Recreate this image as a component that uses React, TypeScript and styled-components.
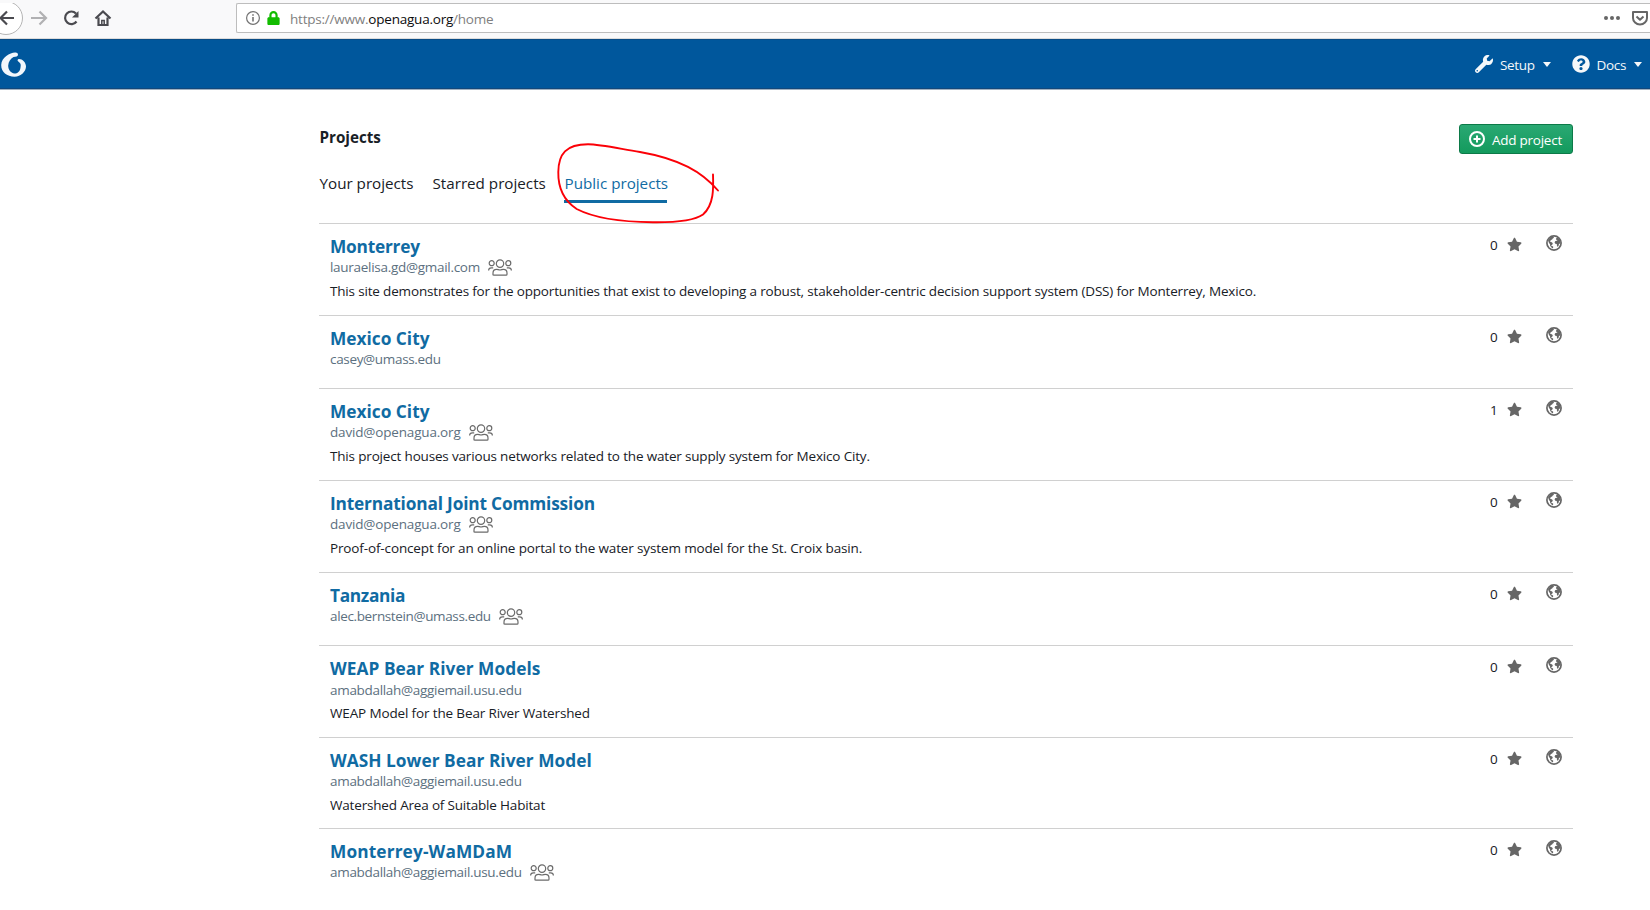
import React from "react";
import styled, { createGlobalStyle } from "styled-components";
import { FaWrench, FaQuestionCircle, FaStar, FaLock } from "react-icons/fa";

const Global = createGlobalStyle`
  *, *::before, *::after { box-sizing: border-box; }
  body { margin: 0; background: #fff; color: #182026; overflow: hidden;
    font-family: "Open Sans", "Noto Sans", sans-serif; font-size: 13.5px; }
`;

const Page = styled.div`
  width: 1650px; height: 910px; overflow: hidden; display: flex; flex-direction: column; background: #fff;
`;

const BrowserBar = styled.header`
  flex: none; height: 39px; background: #f9f9fa; border-bottom: 1px solid #dcdcdc;
  display: flex; align-items: flex-start; padding-top: 3px;
`;
const NavButtons = styled.div`
  width: 236px; flex: none; height: 32px; display: flex;
`;
const AddressBox = styled.div`
  flex: 1; height: 30px; background: #fff; border: 1px solid #bdbdbd; border-right: 0;
  border-radius: 2px 0 0 2px; display: flex; align-items: center; padding-left: 9px;
`;
const LockIcon = styled(FaLock)`
  margin-left: 7px; color: #12bc00; width: 13px; height: 14px;
`;
const Url = styled.div`
  margin-left: 10px; color: #808080; flex: 1; line-height: 20px; padding-top: 2px;
  letter-spacing: -0.22px; white-space: nowrap;
  span { color: #0c0c0d; }
`;

const AppBar = styled.nav`
  flex: none; height: 50px; background: #00579c; border-top: 1px solid #0a4c85; border-bottom: 1px solid #11487c;
  box-shadow: 0 1px 0 #9fb0c0; display: flex; align-items: center; color: #f5f8fa;
`;
const Logo = styled.svg`
  width: 27px; height: 27px; margin-right: auto;
`;
const MenuItem = styled.div<{ $gap: number }>`
  display: flex; align-items: center; margin-right: ${(p) => p.$gap}px; white-space: nowrap;
  letter-spacing: -0.35px;
  svg { width: 18px; height: 18px; margin-right: 7px; }
  span { padding-top: 2px; }
`;
const Caret = styled.i`
  margin-left: 8px; border: 4.5px solid transparent; border-top: 5px solid #f5f8fa; border-bottom: 0;
`;

const Main = styled.main`
  width: 1254px; margin-left: 319px; padding-top: 35px; display: flex; flex-direction: column;
`;
const HeadRow = styled.div`
  display: flex; justify-content: space-between; align-items: flex-start; height: 44px;
`;
const Heading = styled.h1`
  margin: 2px 0 0; padding-left: 0.5px; font-size: 15.2px; line-height: 22px; font-weight: 700;
`;
const AddButton = styled.button`
  width: 114px; height: 30px; padding: 0 0 0 9px; border: 1px solid #0c7a48; border-radius: 3px;
  background: linear-gradient(#2aa873, #139a5d); color: #fff; font: inherit; display: flex; align-items: center;
  white-space: nowrap; letter-spacing: -0.25px;
  svg { margin-right: 7px; flex: none; }
  span { padding-top: 2px; }
`;
const Tabs = styled.div`
  display: flex; gap: 20px; height: 55px;
`;
const Tab = styled.div<{ $active?: boolean; $width: number }>`
  width: ${(p) => p.$width}px; height: 35px; font-size: 15.2px; line-height: 31px; white-space: nowrap;
  padding-left: 0.5px;
  color: ${(p) => (p.$active ? "#106ba3" : "#182026")};
  border-bottom: 3px solid ${(p) => (p.$active ? "#106ba3" : "transparent")};
`;

const Row = styled.article<{ $height: number }>`
  height: ${(p) => p.$height}px; border-top: 1px solid #d0d0d0; padding: 0 11px;
  display: flex; justify-content: space-between;
`;
const Info = styled.div`
  padding-top: 11px;
`;
const Title = styled.h2<{ $track: number }>`
  margin: 0; font-size: 17.3px; line-height: 24px; font-weight: 700; color: #106ba3; white-space: nowrap;
  letter-spacing: ${(p) => p.$track}px;
`;
const Owner = styled.div<{ $track: number; $drop?: number }>`
  display: flex; align-items: center; height: 18px; color: #5c7080; white-space: nowrap;
  margin: ${(p) => (p.$drop || 0) - 1}px 0 ${(p) => 6 - (p.$drop || 0)}px;
  letter-spacing: ${(p) => p.$track}px;
  svg { margin-left: 8px; }
`;
const Description = styled.p<{ $track: number }>`
  margin: 0; line-height: 18px; white-space: nowrap; letter-spacing: ${(p) => p.$track}px;
`;
const Stats = styled.div`
  display: flex; align-items: flex-start;
`;
const StarCount = styled.span`
  width: 17px; margin-top: 11px; line-height: 20px;
`;
const StarIcon = styled(FaStar)`
  width: 15px; height: 15px; margin-top: 13px; color: #666;
`;
const GlobeSvg = styled.svg`
  width: 16px; height: 16px; margin: 11px 0 0 24px;
`;
const Scribble = styled.svg`
  position: absolute; left: 550px; top: 136px; pointer-events: none;
`;

const People = () => (
  <svg width="24" height="17" viewBox="0 0 24 17" fill="none" stroke="#6b6b6b" strokeWidth="1.2">
    <circle cx="12" cy="4.6" r="3.7" />
    <circle cx="3.7" cy="4.2" r="2.5" />
    <circle cx="20.3" cy="4.2" r="2.5" />
    <path d="M5 16.2V14c0-2.4 1.500-3.600 3.600-3.600 1.200 0 2 .6 3.400.6s2.200-.6 3.400-.6c2.100 0 3.600 1.200 3.600 3.600v1.300c0 .6-.4.900-.9.900H5.900c-.5 0-.9-.3-.9-.9z" />
    <path d="M.6 11.600C.6 9.700 1.500 8.800 3.400 8.800h1.800M23.400 11.600c0-1.900-.9-2.800-2.800-2.800h-1.800" />
  </svg>
);

const Globe = () => (
  <GlobeSvg viewBox="0 0 16 16">
    <circle cx="8" cy="8" r="7.100" fill="none" stroke="#666" strokeWidth="1.700" />
    <path fill="#666" d="M2 5.400 3.800 2.800 6.400 1.400l1.500.5-.2 1-1 .5-.3.900-1.200.7-.9.800-.2.900 1 .4 1 .3.700.9-.4 1.100-.9.800-.5 1.600-.8-.8-.2-1.800-1-1.200zM5 10.800l1.800.4.500.9-.4 1.200-1.200-.3zM10.200 3l1.400-.7 2.300 2.200.7 2.800-.3 1.500-1.300-.1-.3 1.900-1 1.300-.8-1.300-.1-1.700-1.500-.2-.7-1.100.5-1.400 1.400-.5.900-.2-.4-.8-.9.200z" />
  </GlobeSvg>
);

type Project = {
  title: string; owner: string; shared?: boolean; text?: string; stars: number;
  height: number; titleTrack: number; ownerTrack: number; textTrack?: number; drop?: number;
};

const projects: Project[] = [
  { title: "Monterrey", owner: "lauraelisa.gd@gmail.com", shared: true, text: "This site demonstrates for the opportunities that exist to developing a robust, stakeholder-centric decision support system (DSS) for Monterrey, Mexico.", stars: 0, height: 92, titleTrack: -0.23, ownerTrack: -0.29, textTrack: -0.17 },
  { title: "Mexico City", owner: "casey@umass.edu", stars: 0, height: 73, titleTrack: 0, ownerTrack: -0.33 },
  { title: "Mexico City", owner: "david@openagua.org", shared: true, text: "This project houses various networks related to the water supply system for Mexico City.", stars: 1, height: 92, titleTrack: 0, ownerTrack: -0.17, textTrack: -0.17 },
  { title: "International Joint Commission", owner: "david@openagua.org", shared: true, text: "Proof-of-concept for an online portal to the water system model for the St. Croix basin.", stars: 0, height: 92, titleTrack: -0.17, ownerTrack: -0.17, textTrack: -0.135 },
  { title: "Tanzania", owner: "alec.bernstein@umass.edu", shared: true, stars: 0, height: 73, titleTrack: -0.33, ownerTrack: -0.37 },
  { title: "WEAP Bear River Models", owner: "amabdallah@aggiemail.usu.edu", text: "WEAP Model for the Bear River Watershed", stars: 0, height: 92, titleTrack: 0.05, ownerTrack: -0.31, textTrack: -0.14, drop: 1 },
  { title: "WASH Lower Bear River Model", owner: "amabdallah@aggiemail.usu.edu", text: "Watershed Area of Suitable Habitat", stars: 0, height: 91, titleTrack: 0.04, ownerTrack: -0.31, textTrack: -0.18 },
  { title: "Monterrey-WaMDaM", owner: "amabdallah@aggiemail.usu.edu", shared: true, stars: 0, height: 82, titleTrack: 0.12, ownerTrack: -0.31 },
];

export default function App() {
  return (
    <Page>
      <Global />
      <BrowserBar>
        <NavButtons>
          <svg width="120" height="34" viewBox="0 3 120 34" fill="none" stroke="#4a4a4f" strokeWidth="2.200">
            <circle cx="6" cy="18" r="16.500" fill="#fff" stroke="#b5b5b5" strokeWidth="1" />
            <path d="M14 18H1M7 11.500 0.500 18 7 24.500" />
            <path stroke="#b1b1b3" d="M31 18h14.500M39.500 11.500 46 18l-6.500 6.500" />
            <path d="M76.500 21.500A6.300 6.300 0 1 1 76 13.500" />
            <path d="M78.500 11v6.500H72z" fill="#4a4a4f" stroke="none" />
            <path d="M95.500 18.500 103 11.500l7.500 7M98.500 17.500V25h9v-7.500" />
            <path d="M101.800 25v-4.500h2.400V25" strokeWidth="1.500" />
          </svg>
        </NavButtons>
        <AddressBox>
          <svg width="14" height="14" viewBox="0 0 14 14"><circle cx="7" cy="7" r="6.400" fill="none" stroke="#737373" strokeWidth="1.200" /><path d="M7 6v4.500M7 3.200v1.600" stroke="#737373" strokeWidth="1.600" /></svg>
          <LockIcon />
          <Url>https://www.<span>openagua.org</span>/home</Url>
          <svg width="47" height="16" viewBox="0 0 47 16">
            <circle cx="3" cy="8" r="2" fill="#666" /><circle cx="9" cy="8" r="2" fill="#666" /><circle cx="15" cy="8" r="2" fill="#666" />
            <path d="M30 2h14v6a7 6.500 0 0 1-14 0zM33.500 6.500l3.500 3.300 3.500-3.300" fill="none" stroke="#666" strokeWidth="2" strokeLinejoin="round" />
          </svg>
        </AddressBox>
      </BrowserBar>
      <AppBar>
        <Logo viewBox="0 0 27 27">
          <path fill="#f2f7fc" d="M15 1.500C10 2 1.500 6 1.200 14C1 21 7 25.700 14.500 25.700C21 25.500 26 20.500 26 15.500C26 11.500 22.500 8 19 8C17.500 8 17 9.500 18.300 10.500C21 12.500 21 14 20.500 16.500C20 20.500 17.500 22.500 14.500 22.500C10.500 22 8 18 8.200 14.500C8.500 10.500 10.500 8 13.500 6C16 6 18 5.500 18 3.800C18 2 16.500 1.200 15 1.500Z" />
        </Logo>
        <MenuItem $gap={21}><FaWrench /><span>Setup</span><Caret /></MenuItem>
        <MenuItem $gap={8}><FaQuestionCircle /><span>Docs</span><Caret /></MenuItem>
      </AppBar>
      <Main>
        <HeadRow>
          <Heading>Projects</Heading>
          <AddButton>
            <svg width="16" height="16" viewBox="0 0 16 16" fill="none" stroke="#fff" strokeWidth="2"><circle cx="8" cy="8" r="7" /><path d="M8 4.500v7M4.500 8h7" /></svg>
            <span>Add project</span>
          </AddButton>
        </HeadRow>
        <Tabs>
          <Tab $width={93}>Your projects</Tab>
          <Tab $width={112}>Starred projects</Tab>
          <Tab $width={103} $active>Public projects</Tab>
        </Tabs>
        {projects.map((p, i) => (
          <Row key={i} $height={p.height}>
            <Info>
              <Title $track={p.titleTrack}>{p.title}</Title>
              <Owner $track={p.ownerTrack} $drop={p.drop}>{p.owner}{p.shared && <People />}</Owner>
              {p.text && <Description $track={p.textTrack || 0}>{p.text}</Description>}
            </Info>
            <Stats><StarCount>{p.stars}</StarCount><StarIcon /><Globe /></Stats>
          </Row>
        ))}
      </Main>
      <Scribble width="175" height="92" viewBox="550 136 175 92" fill="none" stroke="#fb0007" strokeWidth="1.900" strokeLinecap="round">
        <path d="M713 174.500C713.500 188 714 205 703 214.500C694 221 672 222.500 653 222.300C624 222 594 218 576.700 209C563 200 558 188 558.300 172C558.500 154 566 144.300 588 144.300C600 144.300 616 148 640 152C680 159 702 172 718 190.500" />
      </Scribble>
    </Page>
  );
}
